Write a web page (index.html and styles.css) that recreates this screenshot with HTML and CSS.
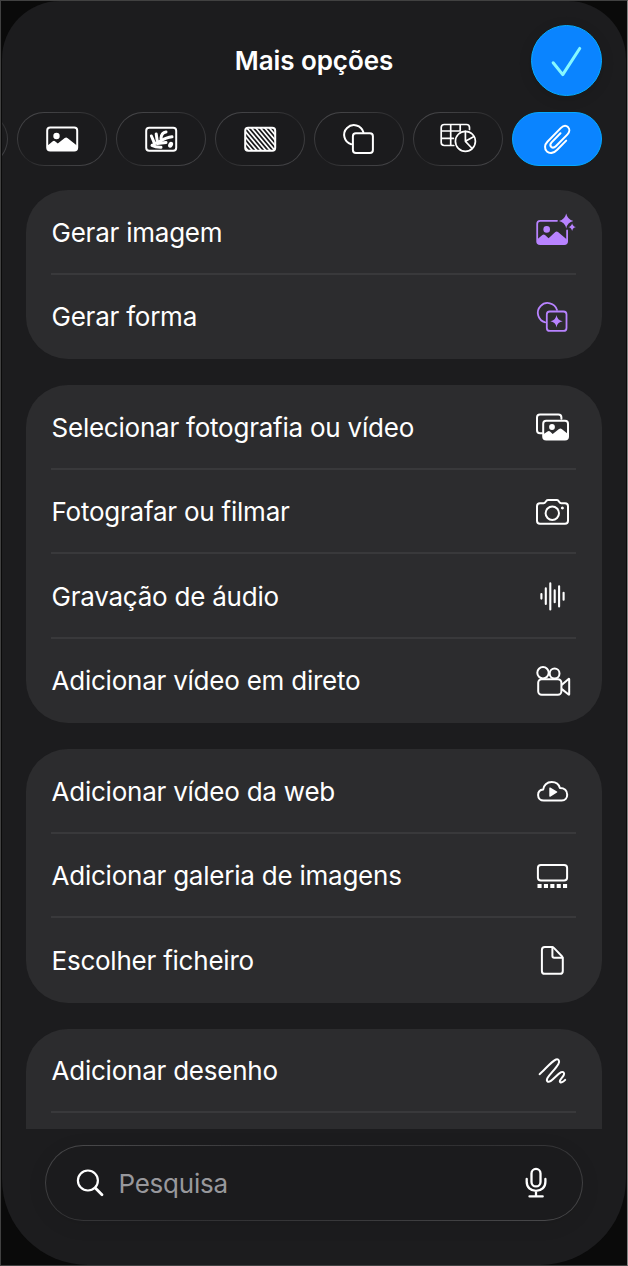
FILE: index.html
```
<!DOCTYPE html>
<html lang="pt">
<head>
<meta charset="utf-8">
<title>Mais opções</title>
<link rel="stylesheet" href="styles.css">
</head>
<body>
<main class="screen">
<div class="panel">
  <header class="header">
    <h1 class="title">Mais opções</h1>
    <button class="confirm" aria-label="OK"><svg class="confirm-icon" viewBox="0 0 70 70"><path d="M21.5 37.3 31.2 49.3 48.4 22.8"/></svg></button>
  </header>

  <nav class="tabs">
    <button class="tab"></button>
    <button class="tab"><svg class="icon" viewBox="0 0 48 48"><rect x="9.2" y="12.6" width="30" height="22.9" rx="3"/><circle class="fill" cx="18.5" cy="21" r="3.2"/><path class="fill" d="M9 31 14.8 26.3Q16 25.3 17.3 26.4L19.8 28.6 26.7 23.1Q28.2 22 29.7 23.2L39.5 31V33Q39 35.5 36.8 35.7H12Q9 35.5 9 32.5Z"/></svg></button>
    <button class="tab"><svg class="icon" viewBox="0 0 48 48"><rect x="9.2" y="12.8" width="30" height="22.9" rx="3"/><g class="leaf"><path d="M17 28.8C22 28 26 22.8 35 21.8"/><path d="M14.4 21 17.2 27.6"/><path d="M19.2 19 20.2 25.6"/><path d="M29 17Q24.4 17.4 24 23.4"/><path d="M15 30.4Q18.4 32.3 24 32.2"/><path d="M20.5 28.4 29 27.4"/></g><ellipse class="leaf-dot" cx="33.6" cy="29.7" rx="2.3" ry="3.1" transform="rotate(25 33.6 29.7)"/></svg></button>
    <button class="tab"><svg class="icon" viewBox="0 0 48 48"><clipPath id="hatch"><rect x="9.2" y="12.8" width="30" height="22.9" rx="3"/></clipPath><rect x="9.2" y="12.8" width="30" height="22.9" rx="3"/><path class="hatch" clip-path="url(#hatch)" d="M-8 12 14 38M-3.5 12 18.5 38M1 12 23 38M5.5 12 27.5 38M10 12 32 38M14.5 12 36.5 38M19 12 41 38M23.5 12 45.5 38M28 12 50 38M32.5 12 54.5 38M37 12 59 38"/></svg></button>
    <button class="tab"><svg class="icon" viewBox="0 0 48 48"><path d="M16.2 29.3A9.8 9.8 0 1 1 28.4 17.2"/><rect x="17.9" y="18.2" width="20" height="19.8" rx="3"/></svg></button>
    <button class="tab"><svg class="icon" viewBox="0 0 48 48"><path class="thin" d="M35.5 14.5V12.5Q35.5 9.5 32.5 9.5H10.3Q7.2 9.5 7.2 12.5V27.6Q7.2 30.5 10.3 30.5H19.8M7.2 16H26.2M7.2 23.4H19.4M16.7 9.5V30.5M26.2 9.5V15"/><circle class="thin" cx="31.4" cy="26.3" r="10"/><path class="thin" d="M31.4 16.3V26.3L38.2 33.5M31.4 26.3 40 21.6"/></svg></button>
    <button class="tab tab-active"><svg class="icon" viewBox="0 0 48 48"><path d="M33.2 25.6 24.2 34.7C20.4 38.7 16.4 38.7 13.9 36.4C11.2 33.8 11.5 29.8 14.4 26.8L27.7 13.1C30.3 10.5 33.2 10.4 35 12.1C36.9 14 36.8 17 34.5 19.4L22.8 31.2C21.2 32.8 19.4 33 18.1 31.8C16.9 30.5 17.2 28.9 18.6 27.4L27.5 18.2"/></svg></button>
  </nav>

  <div class="list">
    <section class="group generate">
      <div class="row"><span class="label">Gerar imagem</span><svg class="icon" viewBox="0 0 48 48"><path d="M29 12.8H12.2Q9.2 12.8 9.2 15.8V33.5Q9.2 36 12.2 36H36.2Q39.1 36 39.1 33.3V22.5"/><circle class="fill" cx="18.7" cy="21.4" r="3.3"/><path class="fill" d="M9 31.5 14.4 27Q15.7 25.8 17 27L20.6 30.2 27.3 24Q28.7 22.8 30 24L39.5 32V34L38 36H10L9 34Z"/><path class="fill" d="M38.2 5.6Q39.5 11.7 45.4 13 39.5 14.3 38.2 20.4 36.9 14.3 31 13 36.9 11.7 38.2 5.6ZM44.1 15.2Q44.8 18.4 48 19.1 44.8 19.8 44.1 23 43.4 19.8 40.2 19.1 43.4 18.4 44.1 15.2Z"/></svg></div>
      <div class="row"><span class="label">Gerar forma</span><svg class="icon" viewBox="0 0 48 48"><path d="M17.2 29.3A9.8 9.8 0 1 1 29 16.9"/><rect x="18.8" y="18.5" width="19.7" height="19.4" rx="3"/><path class="fill" d="M28.5 22.1Q29.2 27.6 34.7 28.3 29.2 29 28.5 34.5 27.8 29 22.3 28.3 27.8 27.6 28.5 22.1Z"/></svg></div>
    </section>

    <section class="group">
      <div class="row"><span class="label">Selecionar fotografia ou vídeo</span><svg class="icon" viewBox="0 0 48 48"><path d="M14 30.2H12Q9 30.2 9 27.2V14.4Q9 11.4 12 11.4H30.4Q33.4 11.4 33.4 14.4V15.7"/><rect x="15.2" y="17.8" width="24.8" height="18.7" rx="3"/><circle class="fill" cx="24" cy="24" r="2.9"/><path class="fill" d="M15 31.6 19.5 28.5Q21 27.5 22.3 28.8L24.7 30.9 31 26Q32.5 24.9 34 26.2L40.3 31.3V34L38 36.7H17L15 34Z"/></svg></div>
      <div class="row"><span class="label">Fotografar ou filmar</span><svg class="icon" viewBox="0 0 48 48"><path d="M12 15.3H15.6Q16.7 15.2 17.5 14L18.2 13Q18.9 12 20.3 12H28.6Q29.9 12 30.6 13L31.3 14Q32 15.3 33.3 15.3H37Q40 15.3 40 18.3V32.8Q40 35.8 37 35.8H12Q9 35.8 9 32.8V18.3Q9 15.3 12 15.3Z"/><circle cx="24.3" cy="25.3" r="6.7"/><circle class="fill" cx="34.4" cy="19.9" r="1.5"/></svg></div>
      <div class="row"><span class="label">Gravação de áudio</span><svg class="icon" viewBox="0 0 48 48"><path class="wave" d="M13.4 22V26.6M17.8 16.4V32M22.3 11.4V37.4M26.7 18.4V30.2M31.1 14.2V34.4M35.6 20.8V27.8"/></svg></div>
      <div class="row"><span class="label">Adicionar vídeo em direto</span><svg class="icon" viewBox="0 0 48 48"><circle cx="15" cy="15.7" r="5.7"/><circle cx="26.6" cy="16.5" r="4.9"/><rect x="10.2" y="22.3" width="23.2" height="15.4" rx="3.5"/><path d="M34.2 27.6 40.6 21.9Q41.2 21.5 41.2 22.2V37.2Q41.2 38 40.6 37.5L34.2 32.4"/></svg></div>
    </section>

    <section class="group">
      <div class="row"><span class="label">Adicionar vídeo da web</span><svg class="icon" viewBox="0 0 48 48"><path d="M15.8 33.5H33.7C37.2 33.5 39.2 30.9 39.2 27.7C39.2 23.6 36.4 21 31.9 21C31 17.5 27.7 15 23.7 15C18.8 15 15.6 18.4 15.2 22.5C12 22.8 10.1 25.2 10.1 28C10.1 31.2 12.3 33.5 15.8 33.5Z"/><path class="fill" d="M21.3 21.2Q21.3 20 22.3 20.6L29 24.6Q29.8 25.1 29 25.6L22.3 29.7Q21.3 30.2 21.3 29.1Z"/></svg></div>
      <div class="row"><span class="label">Adicionar galeria de imagens</span><svg class="icon" viewBox="0 0 48 48"><rect x="9.9" y="13" width="29.2" height="15.5" rx="3"/><path class="fill" d="M9.5 32h4.1v4.1H9.5zM15.9 32H20v4.1h-4.1zM22.3 32h4.1v4.1h-4.1zM28.7 32h4.1v4.1h-4.1zM35 32h4.1v4.1H35z"/></svg></div>
      <div class="row"><span class="label">Escolher ficheiro</span><svg class="icon" viewBox="0 0 48 48"><path d="M16.8 11H23.5Q25 11 26.1 12.1L33.9 20.2Q34.8 21.2 34.8 22.7V34.9Q34.8 37.8 31.9 37.8H16.8Q13.9 37.8 13.9 34.9V13.9Q13.9 11 16.8 11Z"/><path d="M24.4 11.2V20Q24.4 21.8 26.2 21.8H34.5"/></svg></div>
    </section>

    <section class="group">
      <div class="row"><span class="label">Adicionar desenho</span><svg class="icon" viewBox="0 0 48 48"><path class="scribble" d="M11.6 27.2C16.5 23 23.8 14.1 28 12.5C30.8 11.7 32 14.2 30.4 16.9C27.5 22 22.2 26.7 19.5 31C17.8 34.2 20 36 22.9 33.9C26.5 31.3 29.5 27.2 33.2 25.2C35.5 24.2 36.8 26 35.7 28.2C34.5 30.5 31.8 32.6 31.8 34.4C32 36.3 34.8 35.4 37.2 32.9"/></svg></div>
      <div class="row"></div>
    </section>
  </div>

  <footer class="search">
    <svg class="search-icon" viewBox="0 0 32 32"><circle cx="13.9" cy="13.5" r="10"/><path class="handle" d="M21.3 21 28 27.7"/></svg>
    <span class="placeholder">Pesquisa</span>
    <svg class="mic-icon" viewBox="0 0 32 40"><rect x="11.5" y="5.9" width="9" height="17.5" rx="4.5"/><path d="M6.7 15.9V18.8C6.7 24.3 10.6 27.8 16 27.8S25.4 24.3 25.4 18.8V15.9M16 27.8V33.4M9.5 33.4H22.7"/></svg>
  </footer>
</div>
</main>
</body>
</html>
```
FILE: styles.css
```
* { box-sizing: border-box; }
body { margin: 0; background: #0a0a0a; }
button { padding: 0; border: 0; background: none; }

.screen {
  width: 628px;
  height: 1266px;
  border: 1px solid #414141;
  border-right-color: #858585;
  background: #0a0a0a;
  overflow: hidden;
}

.panel {
  display: flex;
  flex-direction: column;
  height: 1264px;
  margin: 0 1px;
  border-radius: 58px 58px 86px 86px;
  background: #1c1c1e;
  overflow: hidden;
  font-family: Inter, "Liberation Sans", sans-serif;
  color: #fff;
}

.header {
  display: grid;
  grid-template-columns: 71px 1fr 71px;
  align-items: center;
  height: 111px;
  padding: 24px 24px 16px;
}
.title {
  grid-column: 2;
  margin: 1px 0 0;
  font-size: 26px;
  font-weight: 600;
  letter-spacing: -0.08px;
  line-height: 32px;
  text-align: center;
}
.confirm {
  width: 71px;
  height: 71px;
  border: 1.5px solid #05adff;
  border-radius: 50%;
  background: #0a84ff;
  box-shadow: 0 3px 14px rgba(0, 0, 0, .12);
}
.confirm-icon { display: block; width: 69px; height: 69px; }
.confirm-icon path { fill: none; stroke: #86f8ff; stroke-width: 3.1; stroke-linecap: round; stroke-linejoin: round; }

.tabs {
  display: flex;
  gap: 9.5px;
  height: 54px;
  margin-left: -83.7px;
}
.tab {
  display: flex;
  flex: none;
  align-items: center;
  justify-content: center;
  width: 89.5px;
  height: 54px;
  border: 1px solid transparent;
  border-radius: 27px;
  color: #fff;
  background:
    linear-gradient(#1b1b1d, #1b1b1d) padding-box,
    linear-gradient(150deg, #47474a 8%, #363638 35%, #28282a 50%, #363638 65%, #454548 92%) border-box;
}
.tab-active {
  border-color: #04a9ff;
  background: #0a84ff;
}

.icon { flex: none; display: block; width: 48px; height: 48px; }
.icon, .search-icon, .mic-icon {
  fill: none;
  stroke: currentColor;
  stroke-width: 2;
  stroke-linecap: round;
  stroke-linejoin: round;
}
.icon .fill { fill: currentColor; stroke: none; }
.icon .thin { stroke-width: 1.7; }
.icon .hatch { stroke-width: 1.7; }
.icon .wave { stroke-width: 2.1; }
.icon .scribble { stroke-width: 2; }
.icon .leaf { stroke-width: 3; }
.icon .leaf-dot { fill: currentColor; stroke: none; }

.list {
  display: flex;
  flex-direction: column;
  gap: 26px;
  height: 963px;
  padding: 24px 24px 0 23.5px;
  overflow: hidden;
}
.group {
  flex: none;
  border-radius: 42px;
  background: #2c2c2e;
}
.row {
  display: flex;
  align-items: center;
  justify-content: space-between;
  height: 84.5px;
  margin: 0 26px 0 25.5px;
}
.row:not(:last-child) {
  padding-top: 2px;
  border-bottom: 2px solid #39393b;
}
.row .icon { margin-right: -0.2px; }
.generate .icon { color: #b883ff; stroke-width: 1.8; }
.label {
  padding: 1px 0 0 0.5px;
  font-size: 26px;
  letter-spacing: -0.23px;
  line-height: 32px;
  white-space: nowrap;
}

.search {
  display: flex;
  align-items: center;
  height: 76px;
  margin: 16px 43px 0;
  padding: 0 30px 0 28px;
  border: 1px solid transparent;
  border-radius: 38px;
  background:
    linear-gradient(#1b1b1d, #1b1b1d) padding-box,
    linear-gradient(165deg, #4a4a4c, #38383a 30%, #303032 50%, #38383a 70%, #4a4a4c) border-box;
  box-shadow: 0 4px 20px rgba(0, 0, 0, .08);
}
.search-icon { width: 32px; height: 32px; stroke-width: 2.2; }
.search-icon .handle { stroke-width: 2.8; }
.placeholder {
  flex: 1;
  margin: 1px 0 0 12.5px;
  font-size: 26px;
  letter-spacing: -0.25px;
  line-height: 32px;
  color: #98989c;
}
.mic-icon { width: 32px; height: 40px; stroke-width: 2.3; }
```
